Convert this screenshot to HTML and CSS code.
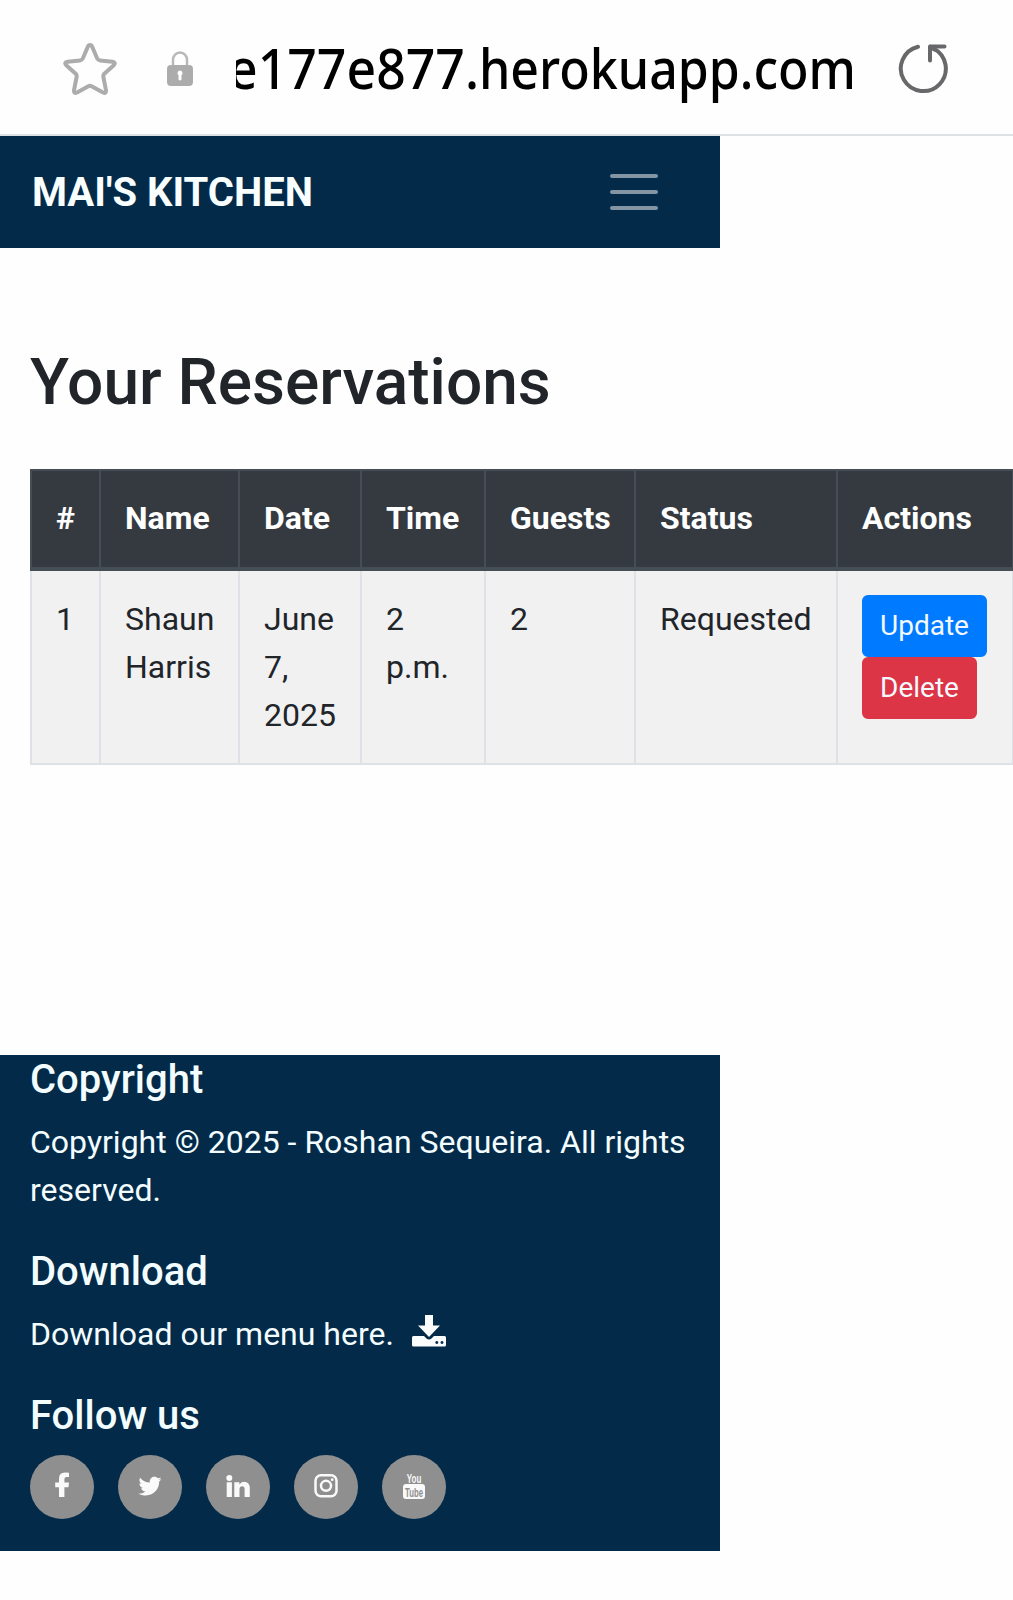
FILE: index.html
```html
<!DOCTYPE html>
<html lang="en">
<head>
<meta charset="utf-8">
<title>Mai's Kitchen</title>
<link rel="stylesheet" href="styles.css">
</head>
<body>
<div class="browser-bar">
  <svg class="star" viewBox="0 0 54 54"><path d="M27 3 Q28.5 3 29.3 5 L34.2 16.5 Q35 18.2 37 18.4 L49.5 19.7 Q53.500 20.500 50.500 23.600 L41.300 31.700 Q40 33 40.400 35 L43 48.300 Q43.300 52 40 50.500 L28.600 44.200 Q27 43.300 25.400 44.200 L14 50.500 Q10.700 52 11 48.300 L13.600 35 Q14 33 12.700 31.700 L3.500 23.600 Q0.500 20.500 4.500 19.700 L17 18.400 Q19 18.200 19.800 16.500 L24.700 5 Q25.500 3 27 3 Z"/></svg>
  <svg class="lock" viewBox="0 0 26 36"><path class="shackle" d="M6 15 V9 A7 7.500 0 0 1 20 9 V15"/><path class="lock-body" fill-rule="evenodd" d="M4 14 H22 Q26 14 26 18 V31 Q26 35 22 35 H4 Q0 35 0 31 V18 Q0 14 4 14 Z M13 19.500 A2.700 2.700 0 0 0 11.500 24.300 V28.500 Q13 30.500 14.500 28.500 V24.300 A2.700 2.700 0 0 0 13 19.500 Z"/></svg>
  <svg class="address" viewBox="0 0 622 134"><text x="-8" y="89" textLength="251" lengthAdjust="spacingAndGlyphs">e177e877.</text><text x="243" y="89" textLength="377" lengthAdjust="spacingAndGlyphs">herokuapp.com</text></svg>
  <svg class="reload" viewBox="0 0 52 52"><path d="M21 3.700 A22.500 22.500 0 1 0 36.500 5.500"/><path d="M33 17.500 V3.500 H47.500 M33 3.500 L37.500 6.500"/></svg>
</div>
<nav class="navbar">
  <span class="brand">MAI'S KITCHEN</span>
  <svg class="menu" viewBox="0 0 48 40"><path d="M2 4 H46 M2 20 H46 M2 36 H46"/></svg>
</nav>
<main class="content">
  <h1>Your Reservations</h1>
  <table class="reservations">
    <colgroup><col class="c-id"><col class="c-name"><col class="c-date"><col class="c-time"><col class="c-guests"><col class="c-status"><col class="c-actions"></colgroup>
    <thead><tr><th>#</th><th>Name</th><th>Date</th><th>Time</th><th>Guests</th><th>Status</th><th>Actions</th></tr></thead>
    <tbody><tr><td>1</td><td>Shaun Harris</td><td>June 7, 2025</td><td>2 p.m.</td><td>2</td><td>Requested</td>
      <td><div class="actions"><a class="btn update">Update</a><a class="btn delete">Delete</a></div></td></tr></tbody>
  </table>
</main>
<footer class="footer">
  <h5>Copyright</h5>
  <p>Copyright © 2025 - Roshan Sequeira. All rights reserved.</p>
  <h5>Download</h5>
  <p class="download">Download our menu here.
    <svg viewBox="0 0 34 32"><path fill-rule="evenodd" d="M13 0 H21 V10.500 H28 L17 22 L6 10.500 H13 Z M1.500 21 H12 L14.500 23.500 Q17 25.500 19.500 23.500 L22 21 H32.500 Q34 21 34 22.500 V30 Q34 31.500 32.500 31.500 H1.500 Q0 31.500 0 30 V22.500 Q0 21 1.500 21 Z M24.800 25.900 A1.500 1.500 0 1 0 24.810 25.900 Z M30 25.900 A1.500 1.500 0 1 0 30.010 25.900 Z"/></svg>
  </p>
  <h5>Follow us</h5>
  <div class="social">
    <a><svg viewBox="0 0 64 64"><path d="M39 17.700 V22 H36.500 Q34.400 22 34.400 24.200 V27.500 H39 L38.400 32.300 H34.400 V42 H29 V32.300 H25.200 V27.500 H29 V23.800 Q29 17.400 35 17.400 Q37.500 17.400 39 17.700 Z"/></svg></a>
    <a><svg viewBox="0 0 512 512"><path transform="translate(164 157) scale(.36)" d="M459.370 151.716c.325 4.548.325 9.097.325 13.645 0 138.720-105.583 298.558-298.558 298.558-59.452 0-114.680-17.219-161.137-47.106 8.447.974 16.568 1.299 25.340 1.299 49.055 0 94.213-16.568 130.274-44.832-46.132-.975-84.792-31.188-98.112-72.772 6.498.974 12.995 1.624 19.818 1.624 9.421 0 18.843-1.300 27.614-3.573-48.081-9.747-84.143-51.980-84.143-102.985v-1.299c13.969 7.797 30.214 12.670 47.431 13.319-28.264-18.843-46.781-51.005-46.781-87.391 0-19.492 5.197-37.360 14.294-52.954 51.655 63.675 129.300 105.258 216.365 109.807-1.624-7.797-2.599-15.918-2.599-24.040 0-57.828 46.782-104.934 104.934-104.934 30.213 0 57.502 12.670 76.670 33.137 23.715-4.548 46.456-13.320 66.599-25.340-7.798 24.366-24.366 44.833-46.132 57.827 21.117-2.273 41.584-8.122 60.426-16.243-14.292 20.791-32.161 39.308-52.628 54.253z"/></svg></a>
    <a><svg viewBox="0 0 64 64"><circle cx="23.300" cy="23" r="3"/><path d="M20.700 27.200 H25.900 V42 H20.700 Z M28.300 27.200 H33.400 V29.400 Q35 26.800 38 26.800 Q43.800 26.800 43.800 33.500 V42 H38.600 V34.300 Q38.600 31.300 36.300 31.300 Q33.500 31.300 33.500 34.300 V42 H28.300 Z"/></svg></a>
    <a><svg viewBox="0 0 64 64"><rect class="outline" x="21.500" y="20.300" width="21" height="21" rx="5.500"/><circle class="outline" cx="32" cy="30.800" r="5"/><circle cx="38.200" cy="24.700" r="1.400"/></svg></a>
    <a><svg viewBox="0 0 64 64"><text class="you" x="24.800" y="27.800" textLength="14.500" lengthAdjust="spacingAndGlyphs">You</text><rect x="21" y="29" width="22" height="15" rx="3"/><text class="tube" x="23" y="41.800" textLength="18" lengthAdjust="spacingAndGlyphs">Tube</text></svg></a>
  </div>
</footer>
</body>
</html>
```
FILE: styles.css
```css
* { box-sizing: border-box; }
body { margin: 0; width: 1013px; min-height: 1600px; overflow: hidden; background: #fefefe; color: #212529; font-family: Roboto, sans-serif; font-size: 32px; line-height: 48px; }
h1, h5, p { margin: 0; }

.browser-bar { display: flex; align-items: flex-start; height: 136px; border-bottom: 2px solid #dfe2e5; }
.browser-bar svg { flex: none; }
.star { width: 54px; height: 54px; margin: 42px 0 0 63px; fill: none; stroke: #acacac; stroke-width: 4; stroke-linejoin: round; }
.lock { width: 26px; height: 36px; margin: 51px 0 0 50px; fill: #acacac; }
.shackle { fill: none; stroke: #b8b8b8; stroke-width: 2.5; }
.address { width: 622px; height: 134px; margin-left: 43px; overflow: hidden; fill: #000; font: 500 56px "Noto Sans", sans-serif; }
.reload { width: 52px; height: 52px; margin: 43px 0 0 39px; fill: none; stroke: #68686b; stroke-width: 4; stroke-linecap: round; stroke-linejoin: round; }

.navbar { display: flex; align-items: center; justify-content: space-between; width: 720px; height: 112px; padding: 0 62px 0 32px; background: #032b49; }
.brand { padding-top: 2px; color: #f9feff; font-size: 40px; font-weight: 700; }
.menu { width: 48px; height: 40px; stroke: #8195a5; stroke-width: 4; stroke-linecap: round; }

.content { height: 807px; padding: 96px 0 0 30px; }
h1 { margin-bottom: 48px; font-size: 64px; font-weight: 500; line-height: 77px; }
.reservations { width: 983px; table-layout: fixed; border-collapse: collapse; }
.c-id { width: 69px; }
.c-name { width: 139px; }
.c-date { width: 122px; }
.c-time { width: 124px; }
.c-guests { width: 150px; }
.c-status { width: 202px; }
.c-actions { width: 176px; }
th, td { padding: 24px 0 24px 24px; text-align: left; vertical-align: top; }
th { padding-top: 23px; padding-bottom: 25px; border: 2px solid #454d55; border-bottom-width: 4px; background: #343a40; color: #fff; font-weight: 700; }
td { padding-right: 20px; border: 2px solid #dee2e6; background: #f1f1f2; }
td:last-child { padding-right: 0; }
.actions { display: flex; flex-direction: column; align-items: flex-start; height: 144px; }
.btn { padding: 8px 16px; border: 2px solid; border-radius: 6px; color: #f4f9ff; font-size: 28px; line-height: 42px; }
.update { border-color: #007bff; background: #007bff; }
.delete { border-color: #dc3545; background: #dc3545; }

.footer { width: 720px; height: 496px; padding: 1px 30px 0; background: #032b49; color: #f3fdff; }
.footer h5 { margin-bottom: 14px; font-size: 40px; font-weight: 500; line-height: 48px; }
.footer p { margin-bottom: 34px; }
.download { display: flex; gap: 18px; }
.download svg { width: 34px; height: 32px; margin-top: 5px; fill: #fafcfd; }
.social { display: flex; gap: 24px; padding-top: 1px; }
.social a { width: 64px; height: 64px; border-radius: 50%; background: #8f8f8f; }
.social svg { display: block; width: 64px; height: 64px; fill: #fafafa; }
.social .outline { fill: none; stroke: #fafafa; stroke-width: 2.5; }
.you, .tube { font: 700 13px "Liberation Sans", sans-serif; }
.social .tube { fill: #8f8f8f; }
```
